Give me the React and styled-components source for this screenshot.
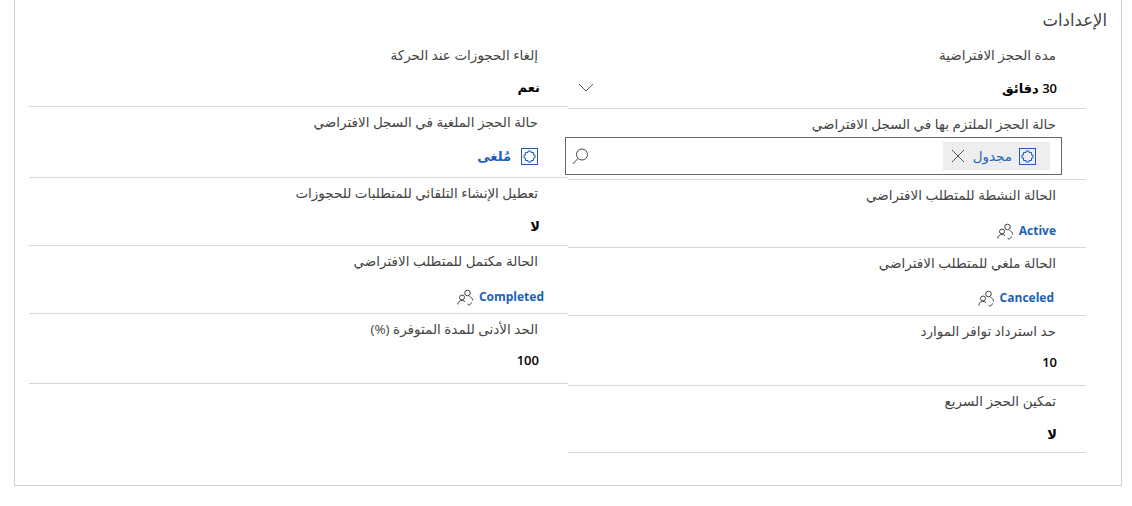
import React from 'react';
import styled, { createGlobalStyle } from 'styled-components';

const GlobalStyle = createGlobalStyle`
  html, body {
    margin: 0;
    background: #fff;
    overflow: hidden;
  }
  body {
    font-family: "Open Sans", "DejaVu Sans", sans-serif;
  }
`;

const Panel = styled.section`
  box-sizing: border-box;
  width: 1108px;
  height: 486px;
  margin-left: 14px;
  padding: 8px 14px 0 15px;
  border: 1px solid #cfcfcf;
  border-top: none;
`;

const Title = styled.h2`
  margin: 0;
  height: 24px;
  font-size: 16.5px;
  line-height: 24px;
  font-weight: 400;
  color: #444;
`;

const Columns = styled.div`
  display: grid;
  grid-template-columns: 518px 539px;
  margin: 8px 21px 0 0;
`;

const Column = styled.div`
  display: flex;
  flex-direction: column;
`;

const Row = styled.div`
  box-sizing: border-box;
  height: ${(p) => p.$height}px;
  padding: 5px 30px 0 0;
  border-bottom: 1px solid #d8d8d8;
`;

const Label = styled.div`
  height: 20px;
  font-size: 13.5px;
  line-height: 20px;
  color: #444;
`;

const Value = styled.div`
  display: flex;
  align-items: center;
  height: 20px;
  margin-top: ${(p) => p.$gap}px;
  margin-right: ${(p) => p.$shift || 0}px;
  font-size: 13px;
  line-height: 20px;
  font-weight: 600;
  color: #000;
`;

const Chevron = styled.svg`
  width: 16px;
  height: 10px;
  margin-right: auto;
  margin-left: 10px;
  fill: none;
  stroke: #555;
`;

const RecordLink = styled.span`
  color: #1d5fb8;
  font-size: 12px;
  font-weight: 700;
`;

const ArabicLink = styled(RecordLink)`
  font-size: 13px;
`;

const RecordIcon = styled.svg`
  flex: none;
  width: 17px;
  height: 17px;
  fill: none;
  stroke: ${(p) => p.$color};
  margin-left: ${(p) => p.$after}px;
  margin-right: ${(p) => p.$before}px;
`;

const Lookup = styled.div`
  box-sizing: border-box;
  display: flex;
  align-items: center;
  justify-content: space-between;
  width: 497px;
  height: 38px;
  margin: 3px -6px 0 0;
  padding: 0 11px 0 6px;
  border: 1px solid #666;
  background: #fff;
  position: relative;
`;

const Chip = styled.div`
  display: flex;
  align-items: center;
  height: 28px;
  padding: 0 14px 0 8px;
  background: #eee;
  font-size: 13.5px;
  color: #2266c0;
`;

const ChipRemove = styled.svg`
  width: 14px;
  height: 14px;
  margin-right: 8px;
  stroke: #555;
  fill: none;
`;

const SearchIcon = styled.svg`
  width: 17px;
  height: 17px;
  stroke: #444;
  fill: none;
`;

const PuzzleIcon = ({ after, before = 0 }) => (
  <RecordIcon viewBox="0 0 17 17" $color="#1d5fb8" $after={after} $before={before}>
    <rect x="0.5" y="0.5" width="16" height="16" />
    <path d="M4.500 4.500h2.500v-1.500h3v1.500h2.500v2.500h1.500v3h-1.500v2.500h-2.500v1.500h-3v-1.500h-2.500v-2.500h-1.500v-3h1.500z" />
  </RecordIcon>
);

const PeopleIcon = () => (
  <RecordIcon viewBox="0 0 17 17" $color="#444" $after={0} $before={5}>
    <circle cx="10.500" cy="4" r="2.800" />
    <circle cx="5" cy="8.500" r="2.500" />
    <path d="M0.800 15.500c0-2.500 1.800-4 4.200-4 1.200 0 2.300.4 3 1.200" />
    <path d="M10.500 15l1.500 1.300 3-2.800M12.500 7.500c1.800.6 3 2 3.300 4" />
  </RecordIcon>
);

const fields = {
  right: [
    { label: 'مدة الحجز الافتراضية', height: 69, gap: 13, value: '30 دقائق', shift: -1, chevron: true },
    { label: 'حالة الحجز الملتزم بها في السجل الافتراضي', height: 71, lookup: 'مجدول' },
    { label: 'الحالة النشطة للمتطلب الافتراضي', height: 68, gap: 16, person: 'Active' },
    { label: 'الحالة ملغي للمتطلب الافتراضي', height: 68, gap: 15, person: 'Canceled', shift: 2 },
    { label: 'حد استرداد توافر الموارد', height: 70, gap: 11, value: '10', shift: -1 },
    { label: 'تمكين الحجز السريع', height: 67, gap: 13, value: 'لا', shift: -1 },
  ],
  left: [
    { label: 'إلغاء الحجوزات عند الحركة', height: 67, gap: 12, value: 'نعم', shift: -2 },
    { label: 'حالة الحجز الملغية في السجل الافتراضي', height: 71, gap: 14, record: 'مُلغى', shift: 0 },
    { label: 'تعطيل الإنشاء التلقائي للمتطلبات للحجوزات', height: 68, gap: 13, value: 'لا', shift: -2 },
    { label: 'الحالة مكتمل للمتطلب الافتراضي', height: 68, gap: 16, person: 'Completed', shift: -6 },
    { label: 'الحد الأدنى للمدة المتوفرة (%)', height: 70, gap: 11, value: '100', shift: -1 },
  ],
};

const Field = ({ field }) => {
  const { label, height, gap, value, shift, chevron, lookup, person, record } = field;
  return (
    <Row $height={height}>
      <Label>{label}</Label>
      {value && (
        <Value $gap={gap} $shift={shift}>
          {value}
          {chevron && (
            <Chevron viewBox="0 0 16 10">
              <path d="M1 1l7 7 7-7" />
            </Chevron>
          )}
        </Value>
      )}
      {person && (
        <Value $gap={gap} $shift={shift}>
          <RecordLink>{person}</RecordLink>
          <PeopleIcon />
        </Value>
      )}
      {record && (
        <Value $gap={gap} $shift={shift}>
          <PuzzleIcon after={10} />
          <ArabicLink>{record}</ArabicLink>
        </Value>
      )}
      {lookup && (
        <Lookup>
          <Chip>
            <PuzzleIcon after={7} />
            {lookup}
            <ChipRemove viewBox="0 0 14 14">
              <path d="M1 1l12 12M13 1L1 13" />
            </ChipRemove>
          </Chip>
          <SearchIcon viewBox="0 0 17 17">
            <circle cx="10" cy="6.500" r="5.500" />
            <path d="M6 10.500L0.800 16" />
          </SearchIcon>
        </Lookup>
      )}
    </Row>
  );
};

const App = () => (
  <>
    <GlobalStyle />
    <Panel dir="rtl">
      <Title>الإعدادات</Title>
      <Columns>
        <Column>
          {fields.right.map((field) => (
            <Field key={field.label} field={field} />
          ))}
        </Column>
        <Column>
          {fields.left.map((field) => (
            <Field key={field.label} field={field} />
          ))}
        </Column>
      </Columns>
    </Panel>
  </>
);

export default App;
